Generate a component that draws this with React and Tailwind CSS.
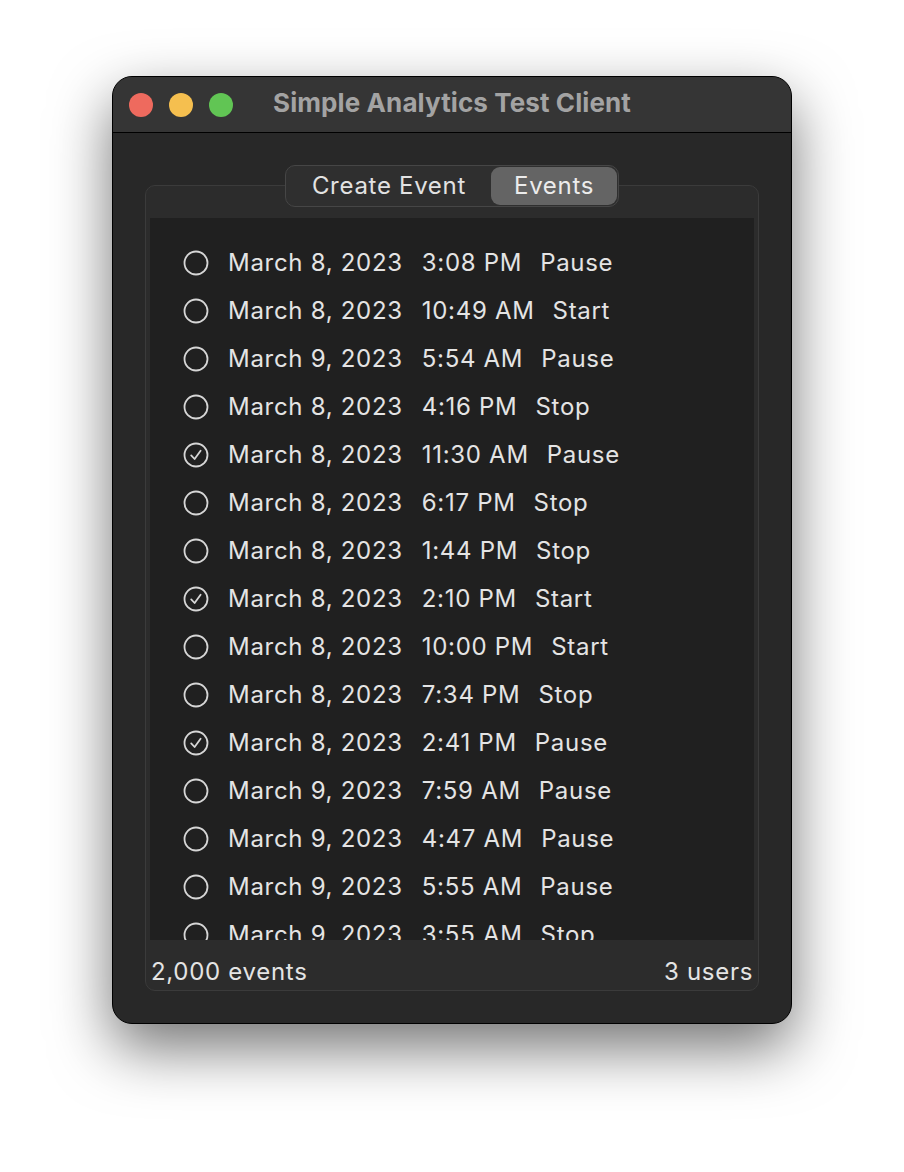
import React from 'react'

const events = [
  ['March 8, 2023', '3:08 PM', 'Pause', false],
  ['March 8, 2023', '10:49 AM', 'Start', false],
  ['March 9, 2023', '5:54 AM', 'Pause', false],
  ['March 8, 2023', '4:16 PM', 'Stop', false],
  ['March 8, 2023', '11:30 AM', 'Pause', true],
  ['March 8, 2023', '6:17 PM', 'Stop', false],
  ['March 8, 2023', '1:44 PM', 'Stop', false],
  ['March 8, 2023', '2:10 PM', 'Start', true],
  ['March 8, 2023', '10:00 PM', 'Start', false],
  ['March 8, 2023', '7:34 PM', 'Stop', false],
  ['March 8, 2023', '2:41 PM', 'Pause', true],
  ['March 9, 2023', '7:59 AM', 'Pause', false],
  ['March 9, 2023', '4:47 AM', 'Pause', false],
  ['March 9, 2023', '5:55 AM', 'Pause', false],
  ['March 9, 2023', '3:55 AM', 'Stop', false],
]

function CircleIcon({ checked }) {
  return (
    <svg width="26" height="26" viewBox="0 0 26 26" className="flex-shrink-0">
      <circle cx="13" cy="13" r="11.5" fill="none" stroke="#d6d6d6" strokeWidth="1.8" />
      {checked && (
        <path d="M8.2 13.4 L11.6 17 L17.6 8.8" fill="none" stroke="#d6d6d6" strokeWidth="1.8" strokeLinecap="round" strokeLinejoin="round" />
      )}
    </svg>
  )
}

export default function App() {
  return (
    <div className="min-h-[1172px] bg-white pt-[76px]" style={{ fontFamily: 'Inter, "Helvetica Neue", Arial, sans-serif' }}>
      <div className="mx-auto w-[680px] h-[948px] rounded-[20px] border border-black bg-[#282828] shadow-[0_24px_60px_rgba(0,0,0,0.55)] overflow-hidden flex flex-col">

        {/* Title bar */}
        <div className="relative h-[56px] flex-shrink-0 bg-[#353535] border-b border-black flex items-center justify-center">
          <div className="absolute left-[16px] top-0 h-full flex items-center gap-[16px]">
            <span className="w-[24px] h-[24px] rounded-full bg-[#ee6a5e]" />
            <span className="w-[24px] h-[24px] rounded-full bg-[#f5bf4f]" />
            <span className="w-[24px] h-[24px] rounded-full bg-[#61c554]" />
          </div>
          <p className="-mt-[4px] text-[26px] font-bold text-[#a3a3a3] tracking-[0.1px]">Simple Analytics Test Client</p>
        </div>

        {/* Body */}
        <div className="flex-1 px-[32px] pt-[32px] pb-[32px] flex flex-col tracking-[0.7px]">
          <div className="relative z-10 mx-auto flex items-center h-[42px] rounded-[10px] border border-[#464646] bg-[#2f2f2f] p-[1px]">
            <div className="h-full px-[25px] flex items-center text-[24px] text-[#e2e2e2]">Create Event</div>
            <div className="h-full px-[23px] flex items-center rounded-[9px] bg-[#646464] text-[24px] text-[#ececec]">Events</div>
          </div>

          <div className="-mt-[22px] flex-1 rounded-[10px] border border-[#3b3b3b] bg-[#2c2c2c] px-[4px] pt-[32px] flex flex-col">
            <div className="h-[722px] bg-[#202020] overflow-hidden pt-[21px] pl-[33px]">
              {events.map(([date, time, action, checked], i) => (
                <div key={i} className="h-[48px] flex items-center text-[24px] text-[#e4e4e4]">
                  <CircleIcon checked={checked} />
                  <span className="ml-[19px]">{date}</span>
                  <span className="ml-[19px]">{time}</span>
                  <span className="ml-[18px]">{action}</span>
                </div>
              ))}
            </div>
            <div className="flex-1 flex items-center justify-between px-[1px] pt-[13px] text-[24px] text-[#e4e4e4]">
              <p>2,000 events</p>
              <p>3 users</p>
            </div>
          </div>
        </div>
      </div>
    </div>
  )
}
